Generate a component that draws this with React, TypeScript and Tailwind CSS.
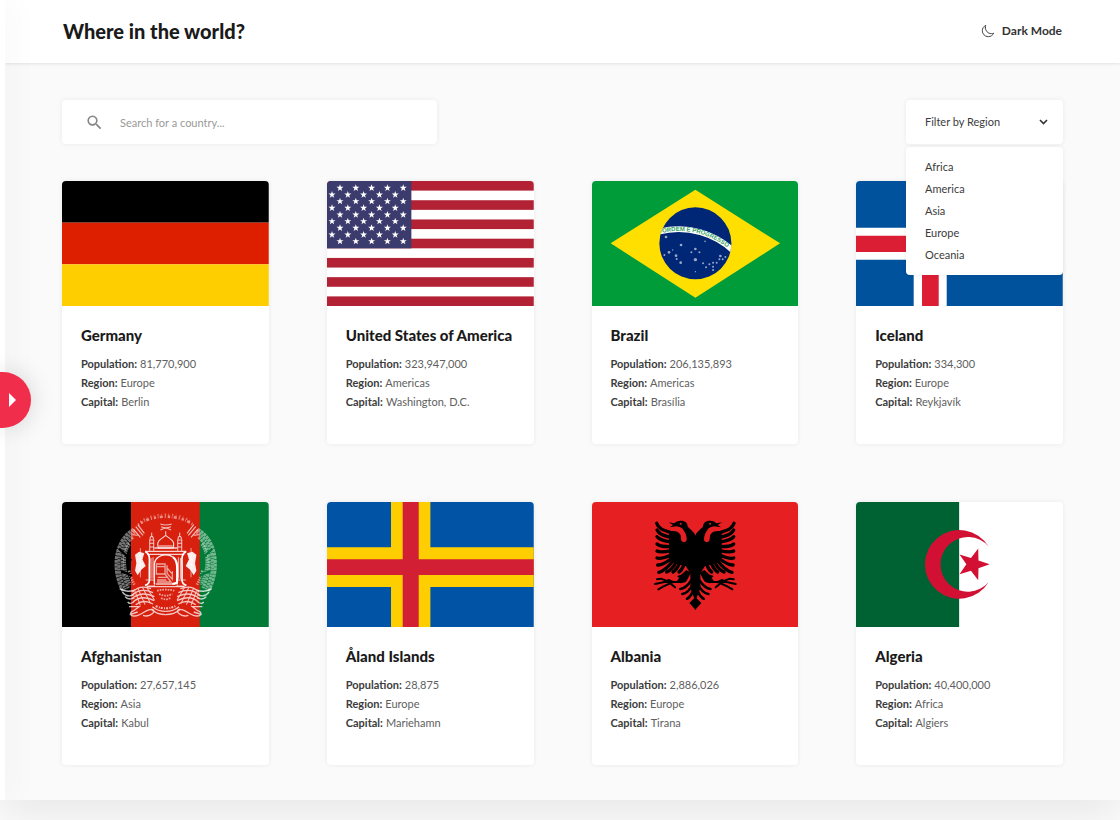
import { useState, type ReactNode } from "react";
import { IoMoonOutline } from "react-icons/io5";
import { MdSearch } from "react-icons/md";

const starPoints = (cx: number, cy: number, r: number, turn = -90) =>
  Array.from({ length: 10 }, (_, i) => {
    const a = ((turn + i * 36) * Math.PI) / 180;
    const d = i % 2 ? r * 0.4 : r;
    return `${(cx + d * Math.cos(a)).toFixed(1)},${(cy + d * Math.sin(a)).toFixed(1)}`;
  }).join(" ");

function Flag({ label, children }: { label: string; children: ReactNode }) {
  return (
    <svg
      role="img"
      aria-label={label}
      viewBox="0 0 620 375"
      preserveAspectRatio="none"
      className="block h-[125px] w-full rounded-t-[4px]"
    >
      {children}
    </svg>
  );
}

function Germany() {
  return (
    <Flag label="Flag of Germany">
      <rect width="620" height="125" fill="#000" />
      <rect y="125" width="620" height="125" fill="#dd1f00" />
      <rect y="250" width="620" height="125" fill="#ffce00" />
    </Flag>
  );
}

function UnitedStates() {
  const stars: [number, number][] = [];
  for (let row = 0; row < 9; row++) {
    for (let col = 0; col < 5; col++) {
      stars.push([(row % 2 ? 15 : 39) + col * 47.4, 21 + row * 20]);
    }
  }
  return (
    <Flag label="Flag of the United States of America">
      <rect width="620" height="375" fill="#fff" />
      {[0, 2, 4, 6, 8, 10, 12].map((i) => (
        <rect key={i} y={i * 28.85} width="620" height="28.85" fill="#b22234" />
      ))}
      <rect width="253" height="202" fill="#3c3b6e" />
      {stars.map(([x, y]) => (
        <polygon key={`${x}-${y}`} points={starPoints(x, y, 11)} fill="#fff" />
      ))}
    </Flag>
  );
}

function Brazil() {
  const dots = [
    [222, 168, 4], [342, 153, 3], [342, 166, 2], [339, 181, 2.5], [267, 192, 4], [310, 204, 4],
    [322, 214, 3], [298, 214, 3], [310, 236, 5], [231, 214, 4], [217, 222, 3], [242, 207, 2],
    [252, 224, 4], [254, 234, 3], [266, 245, 4], [333, 247, 3], [342, 259, 3], [352, 250, 3],
    [385, 225, 4], [382, 235, 3], [392, 235, 3], [374, 245, 3], [363, 245, 3], [363, 257, 3],
    [363, 267, 3], [400, 228, 3], [310, 272, 2],
  ];
  return (
    <Flag label="Flag of Brazil">
      <defs>
        <clipPath id="brazil-globe">
          <circle cx="310" cy="187" r="108" />
        </clipPath>
        <path id="brazil-motto" d="M190 161A234 234 0 0 1 440 233" />
      </defs>
      <rect width="620" height="375" fill="#009c3a" />
      <polygon points="310,26 564,187 310,350 56,187" fill="#ffdf00" />
      <circle cx="310" cy="187" r="108" fill="#002776" />
      <g clipPath="url(#brazil-globe)">
        <path d="M190 155A240 240 0 0 1 440 226" fill="none" stroke="#fff" strokeWidth="17" />
      </g>
      <text fontSize="18" fontWeight="700" fill="#2f9f5c" className="font-['Liberation_Sans',sans-serif]">
        <textPath href="#brazil-motto" startOffset="22">
          ORDEM E PROGRESSO
        </textPath>
      </text>
      {dots.map(([x, y, r]) => (
        <circle key={`${x}-${y}`} cx={x} cy={y} r={r} fill="#fff" opacity="0.6" />
      ))}
    </Flag>
  );
}

function Iceland() {
  return (
    <Flag label="Flag of Iceland">
      <rect width="620" height="375" fill="#00529c" />
      <path d="M0 140H620V236H0ZM173 0H272V375H173Z" fill="#fff" />
      <path d="M0 164H620V213H0ZM198 0H248V375H198Z" fill="#dc1e35" />
    </Flag>
  );
}

function WreathSide() {
  return (
    <g fill="none" stroke="#fff">
      <path d="M72 74C14 106 4 195 40 260" strokeWidth="9" strokeDasharray="9 2" opacity="0.45" />
      <path d="M76 82C22 112 14 195 48 254" strokeWidth="9" strokeDasharray="6 2 8 2" opacity="0.45" />
      <path d="M70 98C33 125 26 195 57 250" strokeWidth="9" strokeDasharray="8 2" opacity="0.45" />
      <path d="M60 118C42 140 36 190 62 240" strokeWidth="9" strokeDasharray="5 2" opacity="0.45" />
      <path d="M58 198C62 215 66 225 74 240" strokeWidth="8" strokeDasharray="4 3" opacity="0.55" />
      <path d="M78 66L100 92M84 60L104 86M72 74L92 98M84 92L70 90" strokeWidth="3" opacity="0.75" />
    </g>
  );
}

function Sheaf() {
  return (
    <g fill="none" stroke="#fff" strokeWidth="4" opacity="0.75">
      <path d="M30 252C45 262 58 262 76 256M38 262C48 276 60 276 74 270M46 276C54 286 64 284 74 280M54 292C60 300 66 296 72 292" />
      <path d="M68 262C84 246 104 244 124 252M66 272C84 256 108 254 130 264M66 282C86 266 110 264 134 276M70 292C88 276 110 276 134 288M78 300C94 288 112 288 130 298" />
      <path d="M84 250L106 300M98 247L122 296M76 260L92 302M112 249L134 286" strokeWidth="3" />
      <path d="M58 306H88L72 318C60 322 58 334 74 334C96 334 108 312 128 314C142 318 122 340 100 332M60 330L84 322" />
      <path d="M128 306C142 318 156 320 168 320M124 314C140 328 156 330 168 330" />
    </g>
  );
}

function BannerAndTower() {
  return (
    <g fill="none" stroke="#fff">
      <path d="M76 150L88 141L104 146L98 164L108 184L94 196L84 212L76 198L80 176Z" fill="#fff" stroke="none" opacity="0.92" />
      <path d="M92 130V218M84 168L100 160M84 184L102 176" strokeWidth="2.5" opacity="0.7" />
      <path d="M107 141C120 146 120 160 119 180V228C118 236 114 240 106 242" strokeWidth="5" />
      <path d="M120 138V106H132V138M118 106H134M121 104C121 92 131 92 131 104M126 94V84M120 116H132M120 127H132" strokeWidth="3" opacity="0.78" />
      <path d="M108 226H134V244H108M124 160V222M130 158V222" strokeWidth="3" opacity="0.7" />
    </g>
  );
}

function Afghanistan() {
  return (
    <Flag label="Flag of Afghanistan">
      <rect width="208" height="375" fill="#000" />
      <rect x="207" width="207" height="375" fill="#d8200f" />
      <rect x="413" width="207" height="375" fill="#007a36" />
      <g transform="translate(143 8)">
        <g>
          <WreathSide />
          <path d="M28 132C46 150 58 158 64 168M34 200C48 204 58 208 66 214" stroke="#000" strokeWidth="7" fill="none" />
          <BannerAndTower />
          <Sheaf />
        </g>
        <g transform="translate(336 0) scale(-1 1)">
          <WreathSide />
          <path d="M28 132C46 150 58 158 64 168M34 200C48 204 58 208 66 214" stroke="#007a36" strokeWidth="7" fill="none" />
          <BannerAndTower />
          <Sheaf />
        </g>
        <g fill="none" stroke="#fff">
          <path d="M86 60C128 28 208 28 250 60" strokeWidth="8" strokeDasharray="3 6 7 5 2 4 9 6" opacity="0.5" />
          <path d="M92 50C132 22 204 22 244 50" strokeWidth="5" strokeDasharray="2 9 4 7" opacity="0.4" />
          <path d="M152 58Q168 64 186 58M154 66Q168 72 184 66M152 76Q168 66 184 76" strokeWidth="3" opacity="0.7" />
          <path d="M168 80V90M146 130C138 108 154 104 168 92C182 104 198 108 190 130ZM148 124H188" strokeWidth="3" opacity="0.85" />
          <path d="M106 140H230M112 149H224M134 130H202" strokeWidth="4" opacity="0.8" />
          <path d="M134 238V176C140 142 196 142 202 176V236" strokeWidth="4" opacity="0.9" />
          <path d="M190 158C204 166 203 190 202 234L188 238" strokeWidth="6" />
          <path d="M140 178H166V208H140ZM140 186H166M172 182V206L188 224V200M166 208L184 232H142M144 218H176M172 190L186 206M142 226H170" strokeWidth="4" opacity="0.6" />
          <path d="M112 246H224M138 238H198" strokeWidth="4" opacity="0.75" />
          <path d="M142 258Q168 252 194 258M148 268Q168 278 188 268M154 280Q168 288 182 280" strokeWidth="5" strokeDasharray="5 3" opacity="0.6" />
          <path d="M138 304Q168 318 198 304" strokeWidth="6" strokeDasharray="6 4 3 3" opacity="0.7" />
        </g>
      </g>
    </Flag>
  );
}

function Aland() {
  return (
    <Flag label="Flag of the Åland Islands">
      <rect width="620" height="375" fill="#0053a5" />
      <path d="M0 136H620V255H0ZM192 0H310V375H192Z" fill="#ffce00" />
      <path d="M0 172H620V219H0ZM227 0H275V375H227Z" fill="#d21f34" />
    </Flag>
  );
}

function EagleHalf() {
  return (
    <g>
      <path d="M330 124C326 112 314 104 306 96C306 84 297 77 284 78C276 78 270 82 265 86L249 83L262 91L252 98L272 95C282 97 290 99 293 106L299 116C304 128 306 144 294 142C282 140 288 128 284 120C278 108 262 108 250 110L250 192L272 208L300 214L314 236L314 280L330 322Z" />
      <circle cx="285" cy="87" r="3" fill="#e62022" />
      <g fill="none" stroke="#000" strokeWidth="10" strokeLinecap="round">
        <path d="M213 86C218 102 232 106 256 114" />
        <path d="M214 106C220 118 232 122 256 128" />
        <path d="M214 126C222 136 234 138 256 142" />
        <path d="M214 148C222 156 236 156 256 156" />
        <path d="M214 169C224 175 238 172 256 168" />
        <path d="M214 190C226 194 240 188 258 180" />
        <path d="M216 211C230 212 244 202 260 190" />
        <path d="M219 233C236 230 250 214 264 196" />
        <path d="M243 232C256 226 266 214 272 200" />
        <path d="M262 232C272 226 278 214 282 204" />
        <path d="M280 232C290 226 292 216 296 206" />
      </g>
      <path d="M302 226L286 240L274 244L280 250L272 262L286 266L300 262C306 254 310 244 316 234Z" />
      <path
        d="M282 262H236L208 268M262 262L232 276L218 284M252 262L226 252L214 254M262 262L248 256M256 268L268 278"
        fill="none"
        stroke="#000"
        strokeWidth="6"
        strokeLinecap="round"
      />
      <g fill="none" stroke="#000" strokeWidth="8" strokeLinecap="round">
        <path d="M284 283C298 282 308 270 318 256" />
        <path d="M290 298C304 296 314 284 322 268" />
        <path d="M304 312C314 308 320 296 326 280" />
      </g>
      <path d="M330 300L324 312L311 325L330 346Z" />
    </g>
  );
}

function Albania() {
  return (
    <Flag label="Flag of Albania">
      <rect width="620" height="375" fill="#e62022" />
      <g transform="translate(-19 -22)">
        <EagleHalf />
        <g transform="translate(658 0) scale(-1 1)">
          <EagleHalf />
        </g>
      </g>
    </Flag>
  );
}

function Algeria() {
  return (
    <Flag label="Flag of Algeria">
      <rect width="310" height="375" fill="#006233" />
      <rect x="310" width="310" height="375" fill="#fff" />
      <g transform="translate(-19 -22)" fill="#d21034">
        <path d="M417 156A103 103 0 1 0 417 262A82 82 0 1 1 417 156Z" />
        <polygon points={starPoints(370, 209, 50, 0)} />
      </g>
    </Flag>
  );
}

const countries = [
  { name: "Germany", population: "81,770,900", region: "Europe", capital: "Berlin", Art: Germany },
  { name: "United States of America", population: "323,947,000", region: "Americas", capital: "Washington, D.C.", Art: UnitedStates },
  { name: "Brazil", population: "206,135,893", region: "Americas", capital: "Brasília", Art: Brazil },
  { name: "Iceland", population: "334,300", region: "Europe", capital: "Reykjavík", Art: Iceland },
  { name: "Afghanistan", population: "27,657,145", region: "Asia", capital: "Kabul", Art: Afghanistan },
  { name: "Åland Islands", population: "28,875", region: "Europe", capital: "Mariehamn", Art: Aland },
  { name: "Albania", population: "2,886,026", region: "Europe", capital: "Tirana", Art: Albania },
  { name: "Algeria", population: "40,400,000", region: "Africa", capital: "Algiers", Art: Algeria },
];

const regions = ["Africa", "America", "Asia", "Europe", "Oceania"];

function Fact({ label, value }: { label: string; value: string }) {
  return (
    <div className="flex gap-[3px]">
      <dt className="font-bold text-[#3c3c3c]">{label}:</dt>
      <dd className="text-[#606060]">{value}</dd>
    </div>
  );
}

export default function App() {
  const [query, setQuery] = useState("");
  const [open, setOpen] = useState(true);
  const [region, setRegion] = useState("");

  const shown = countries.filter(
    (c) => c.name.toLowerCase().includes(query.toLowerCase()) && c.region.startsWith(region),
  );

  return (
    <div className="flex min-h-screen flex-col bg-[#fafafa] pb-5 font-['Lato','Open_Sans',sans-serif] text-[#1a1a1a]">
      <div className="relative flex grow bg-[#fafafa] shadow-[0_12px_40px_rgba(0,0,0,0.08)]">
        <div className="pointer-events-none absolute inset-0 z-10 overflow-hidden">
          <div className="h-full w-[5px] bg-white shadow-[0_0_30px_rgba(0,0,0,0.13)]" />
        </div>
        <button
          type="button"
          aria-label="Open panel"
          className="absolute top-[372px] left-0 z-20 flex h-14 w-[31px] items-center rounded-r-full bg-[#f02d4b] pl-[9px] shadow-[0_0_24px_rgba(0,0,0,0.16)]"
        >
          <svg viewBox="0 0 7 14" className="h-[14px] w-[7px]" aria-hidden="true">
            <path d="M0 0L7 7L0 14Z" fill="#fff" />
          </svg>
        </button>

        <div className="grow pl-[5px]">
          <header className="flex h-[63px] items-center justify-between bg-white px-[58px] pb-[2px] shadow-[0_1px_3px_rgba(0,0,0,0.1)]">
            <h1 className="text-[20px] font-black">Where in the world?</h1>
            <button type="button" className="flex items-center gap-[7px] text-[12px] font-bold text-[#333]">
              <IoMoonOutline className="size-[14px]" stroke="currentColor" strokeWidth="14" aria-hidden="true" />
              Dark Mode
            </button>
          </header>

          <main className="px-[57px] pt-[37px] pb-[35px]">
            <div className="flex items-start justify-between">
              <div className="flex h-11 w-[375px] items-center gap-[16px] rounded-[4px] bg-white pr-4 pl-[23px] shadow-[0_0_5px_rgba(0,0,0,0.07)]">
                <label htmlFor="country-search" aria-label="Search">
                  <MdSearch className="size-[19px] text-[#858585]" aria-hidden="true" />
                </label>
                <input
                  id="country-search"
                  type="text"
                  value={query}
                  onChange={(e) => setQuery(e.target.value)}
                  placeholder="Search for a country..."
                  className="h-8 grow bg-transparent text-[11px] outline-none placeholder:text-[#999]"
                />
              </div>

              <div className="relative w-[157px] text-[11px] text-[#3c3c3c]">
                <button
                  type="button"
                  aria-expanded={open}
                  onClick={() => setOpen(!open)}
                  className="flex h-11 w-full items-center justify-between rounded-[4px] bg-white pr-[15px] pl-[19px] shadow-[0_0_5px_rgba(0,0,0,0.07)]"
                >
                  {region || "Filter by Region"}
                  <svg viewBox="0 0 9 6" className="h-[6px] w-[9px]" aria-hidden="true">
                    <path d="M1 1L4.5 4.5L8 1" fill="none" stroke="#333" strokeWidth="1.6" />
                  </svg>
                </button>
                {open && (
                  <ul className="absolute top-[47px] left-0 w-full rounded-[4px] bg-white pt-[9px] pb-[9px] shadow-[0_0_5px_rgba(0,0,0,0.07)]">
                    {regions.map((r) => (
                      <li key={r}>
                        <button
                          type="button"
                          onClick={() => {
                            setRegion(r);
                            setOpen(false);
                          }}
                          className="block h-[22px] w-full pl-[19px] text-left"
                        >
                          {r}
                        </button>
                      </li>
                    ))}
                  </ul>
                )}
              </div>
            </div>

            <div className="mt-[37px] grid grid-cols-4 gap-[58px]">
              {shown.map(({ name, population, region: area, capital, Art }) => (
                <article key={name} className="rounded-[4px] bg-white shadow-[0_0_5px_rgba(0,0,0,0.07)]">
                  <Art />
                  <div className="px-[19px] pt-[19px] pb-[33px]">
                    <h2 className="text-[15px] leading-5 font-black whitespace-nowrap">{name}</h2>
                    <dl className="mt-[9px] text-[11px] leading-[19px]">
                      <Fact label="Population" value={population} />
                      <Fact label="Region" value={area} />
                      <Fact label="Capital" value={capital} />
                    </dl>
                  </div>
                </article>
              ))}
            </div>
          </main>
        </div>
      </div>
    </div>
  );
}
